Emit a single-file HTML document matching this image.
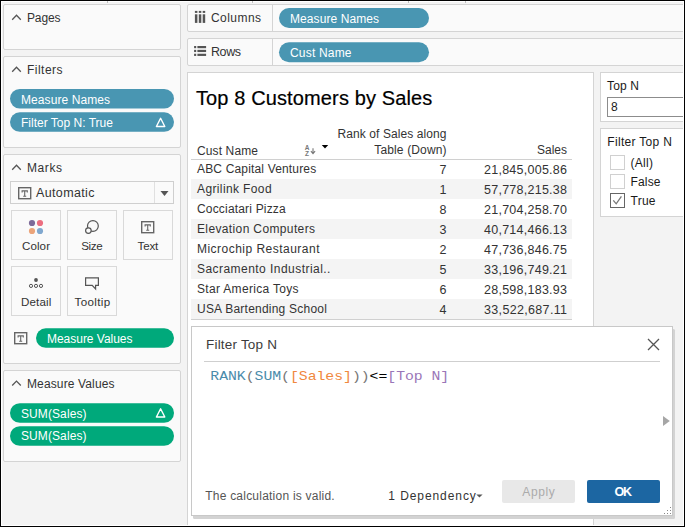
<!DOCTYPE html>
<html><head><meta charset="utf-8"><title>Tableau Filter Top N</title>
<style>html,body{margin:0;padding:0;background:#f2f2f2;overflow:hidden}svg{display:block}text{white-space:pre}</style>
</head><body>
<svg width="685" height="527" viewBox="0 0 685 527" shape-rendering="auto">
<rect x="0" y="0" width="685" height="527" fill="#f3f3f3" rx="0" />
<rect x="3.5" y="4.5" width="177" height="45" fill="#fafafa" stroke="#d4d4d4" rx="1.5" />
<polyline points="12.2,19.700000000000003 16.5,15.3 20.8,19.700000000000003" fill="none" stroke="#555" stroke-width="1.3"/>
<text x="27" y="21.6" font-family="Liberation Sans" font-size="12" fill="#333333" font-weight="normal" text-anchor="start" textLength="33.5" lengthAdjust="spacing" >Pages</text>
<rect x="3.5" y="56.5" width="177" height="91" fill="#fafafa" stroke="#d4d4d4" rx="1.5" />
<polyline points="12.2,71.70000000000002 16.5,67.30000000000001 20.8,71.70000000000002" fill="none" stroke="#555" stroke-width="1.3"/>
<text x="27" y="73.9" font-family="Liberation Sans" font-size="12" fill="#333333" font-weight="normal" text-anchor="start" textLength="35.5" lengthAdjust="spacing" >Filters</text>
<rect x="10" y="89" width="164" height="19.5" rx="9.75" fill="#4996b2"/>
<text x="21" y="103.8" font-family="Liberation Sans" font-size="12" fill="#fff" font-weight="normal" text-anchor="start" textLength="89" lengthAdjust="spacing" >Measure Names</text>
<rect x="10" y="112.3" width="164" height="19.500000000000014" rx="9.750000000000007" fill="#4996b2"/>
<text x="21" y="126.8" font-family="Liberation Sans" font-size="12" fill="#fff" font-weight="normal" text-anchor="start" textLength="92" lengthAdjust="spacing" >Filter Top N: True</text>
<polygon points="160.6,118.3 164.79999999999998,126.5 156.4,126.5" fill="none" stroke="#fff" stroke-width="1.4" stroke-linejoin="round"/>
<rect x="3.5" y="154.5" width="177" height="209" fill="#fafafa" stroke="#d4d4d4" rx="1.5" />
<polyline points="12.2,169.70000000000002 16.5,165.3 20.8,169.70000000000002" fill="none" stroke="#555" stroke-width="1.3"/>
<text x="27" y="172" font-family="Liberation Sans" font-size="12" fill="#333333" font-weight="normal" text-anchor="start" textLength="35" lengthAdjust="spacing" >Marks</text>
<rect x="10.5" y="181.5" width="163" height="22" fill="#fafafa" stroke="#cfcfcf" rx="0" />
<rect x="154" y="182" width="1" height="21" fill="#e0e0e0"/>
<polygon points="160.5,191 168.5,191 164.5,196" fill="#555"/>
<rect x="18.7" y="187.7" width="12" height="11" fill="none" stroke="#666" stroke-width="1.4"/>
<path d="M22.099999999999998,192.5 V190.9 H27.3 V192.5 M24.7,190.9 V196.3 M23.2,196.3 H26.2" fill="none" stroke="#666" stroke-width="1.1"/>
<text x="36" y="196.8" font-family="Liberation Sans" font-size="12.5" fill="#333333" font-weight="normal" text-anchor="start" textLength="58.5" lengthAdjust="spacing" >Automatic</text>
<rect x="11.5" y="210.5" width="49" height="49" fill="#fafafa" stroke="#d9d9d9" rx="0" />
<text x="22" y="249.8" font-family="Liberation Sans" font-size="11.6" fill="#333333" font-weight="normal" text-anchor="start" textLength="28" lengthAdjust="spacing" >Color</text>
<rect x="67.5" y="210.5" width="49" height="49" fill="#fafafa" stroke="#d9d9d9" rx="0" />
<text x="81.2" y="249.8" font-family="Liberation Sans" font-size="11.6" fill="#333333" font-weight="normal" text-anchor="start" textLength="21.5" lengthAdjust="spacing" >Size</text>
<rect x="123.5" y="210.5" width="49" height="49" fill="#fafafa" stroke="#d9d9d9" rx="0" />
<text x="137.5" y="249.8" font-family="Liberation Sans" font-size="11.6" fill="#333333" font-weight="normal" text-anchor="start" textLength="20.8" lengthAdjust="spacing" >Text</text>
<rect x="11.5" y="266.5" width="49" height="49" fill="#fafafa" stroke="#d9d9d9" rx="0" />
<text x="21" y="305.8" font-family="Liberation Sans" font-size="11.6" fill="#333333" font-weight="normal" text-anchor="start" textLength="30.3" lengthAdjust="spacing" >Detail</text>
<rect x="67.5" y="266.5" width="49" height="49" fill="#fafafa" stroke="#d9d9d9" rx="0" />
<text x="74.5" y="305.8" font-family="Liberation Sans" font-size="11.6" fill="#333333" font-weight="normal" text-anchor="start" textLength="35.6" lengthAdjust="spacing" >Tooltip</text>
<circle cx="32" cy="223" r="3.1" fill="#7d6a99"/>
<circle cx="40" cy="223" r="3.1" fill="#ec6e80"/>
<circle cx="32" cy="231" r="3.1" fill="#eba47a"/>
<circle cx="40" cy="231" r="3.1" fill="#80a8cf"/>
<circle cx="92.9" cy="226" r="5.4" fill="none" stroke="#555" stroke-width="1.2"/>
<circle cx="88.4" cy="230.6" r="2.8" fill="#fafafa" stroke="#555" stroke-width="1.2"/>
<rect x="141.7" y="221.7" width="12" height="11" fill="none" stroke="#666" stroke-width="1.4"/>
<path d="M145.1,226.5 V224.9 H150.29999999999998 V226.5 M147.7,224.9 V230.3 M146.2,230.3 H149.2" fill="none" stroke="#666" stroke-width="1.1"/>
<circle cx="36" cy="280" r="1.9" fill="#555"/>
<circle cx="31" cy="285.9" r="1.6" fill="none" stroke="#555" stroke-width="1"/>
<circle cx="36" cy="285.9" r="1.6" fill="none" stroke="#555" stroke-width="1"/>
<circle cx="41" cy="285.9" r="1.6" fill="none" stroke="#555" stroke-width="1"/>
<path d="M85.6,277.8 H98.4 V285.3 H95.6 V289 L92.2,285.3 H85.6 Z" fill="none" stroke="#555" stroke-width="1.2" stroke-linejoin="miter"/>
<rect x="14.7" y="332.7" width="12" height="11" fill="none" stroke="#666" stroke-width="1.4"/>
<path d="M18.099999999999998,337.5 V335.9 H23.3 V337.5 M20.7,335.9 V341.29999999999995 M19.2,341.29999999999995 H22.2" fill="none" stroke="#666" stroke-width="1.1"/>
<rect x="36" y="328.3" width="138" height="19.5" rx="9.75" fill="#00a97b"/>
<text x="47" y="342.8" font-family="Liberation Sans" font-size="12" fill="#fff" font-weight="normal" text-anchor="start" textLength="85.5" lengthAdjust="spacing" >Measure Values</text>
<rect x="3.5" y="370.5" width="177" height="91" fill="#fafafa" stroke="#d4d4d4" rx="1.5" />
<polyline points="12.2,385.49999999999994 16.5,381.09999999999997 20.8,385.49999999999994" fill="none" stroke="#555" stroke-width="1.3"/>
<text x="27" y="387.8" font-family="Liberation Sans" font-size="12" fill="#333333" font-weight="normal" text-anchor="start" textLength="87.5" lengthAdjust="spacing" >Measure Values</text>
<rect x="10" y="403.2" width="164" height="19.600000000000023" rx="9.800000000000011" fill="#00a97b"/>
<text x="21" y="417.6" font-family="Liberation Sans" font-size="12" fill="#fff" font-weight="normal" text-anchor="start" textLength="65.5" lengthAdjust="spacing" >SUM(Sales)</text>
<polygon points="160.6,408.8 164.79999999999998,417 156.4,417" fill="none" stroke="#fff" stroke-width="1.4" stroke-linejoin="round"/>
<rect x="10" y="426.2" width="164" height="19.600000000000023" rx="9.800000000000011" fill="#00a97b"/>
<text x="21" y="440.3" font-family="Liberation Sans" font-size="12" fill="#fff" font-weight="normal" text-anchor="start" textLength="65.5" lengthAdjust="spacing" >SUM(Sales)</text>
<rect x="187.5" y="4.5" width="503" height="27" fill="#fafafa" stroke="#d4d4d4" rx="1.5" />
<rect x="272" y="5" width="1" height="26" fill="#d4d4d4"/>
<rect x="187.5" y="38.5" width="503" height="27" fill="#fafafa" stroke="#d4d4d4" rx="1.5" />
<rect x="272" y="39" width="1" height="26" fill="#d4d4d4"/>
<rect x="194.9" y="10.9" width="2.5" height="2" fill="#555"/>
<rect x="194.9" y="14.3" width="2.5" height="8.6" fill="#555"/>
<rect x="198.8" y="10.9" width="2.5" height="2" fill="#555"/>
<rect x="198.8" y="14.3" width="2.5" height="8.6" fill="#555"/>
<rect x="202.7" y="10.9" width="2.5" height="2" fill="#555"/>
<rect x="202.7" y="14.3" width="2.5" height="8.6" fill="#555"/>
<text x="211" y="22.1" font-family="Liberation Sans" font-size="12" fill="#333333" font-weight="normal" text-anchor="start" textLength="50" lengthAdjust="spacing" >Columns</text>
<rect x="194.1" y="46.0" width="2.1" height="2.2" fill="#555"/>
<rect x="197.4" y="46.0" width="8.7" height="2.2" fill="#555"/>
<rect x="194.1" y="49.85" width="2.1" height="2.2" fill="#555"/>
<rect x="197.4" y="49.85" width="8.7" height="2.2" fill="#555"/>
<rect x="194.1" y="53.75" width="2.1" height="2.2" fill="#555"/>
<rect x="197.4" y="53.75" width="8.7" height="2.2" fill="#555"/>
<text x="211" y="56.1" font-family="Liberation Sans" font-size="12.5" fill="#333333" font-weight="normal" text-anchor="start" textLength="30" lengthAdjust="spacing" >Rows</text>
<rect x="279" y="8" width="150" height="20" rx="10.0" fill="#4996b2"/>
<text x="290" y="23.0" font-family="Liberation Sans" font-size="12" fill="#fff" font-weight="normal" text-anchor="start" textLength="89" lengthAdjust="spacing" >Measure Names</text>
<rect x="279" y="42.2" width="150" height="20.0" rx="10.0" fill="#4996b2"/>
<text x="290" y="56.6" font-family="Liberation Sans" font-size="12" fill="#fff" font-weight="normal" text-anchor="start" textLength="61.5" lengthAdjust="spacing" >Cust Name</text>
<rect x="187.5" y="72.5" width="406" height="528" fill="#ffffff" stroke="#d4d4d4" rx="0" />
<text x="195.9" y="104.5" font-family="Liberation Sans" font-size="20" fill="#000" font-weight="normal" text-anchor="start" textLength="236.4" lengthAdjust="spacing" stroke="#000" stroke-width="0.2">Top 8 Customers by Sales</text>
<text x="197" y="154.6" font-family="Liberation Sans" font-size="12" fill="#333333" font-weight="normal" text-anchor="start" textLength="61" lengthAdjust="spacing" >Cust Name</text>
<text x="307" y="149.6" font-family="Liberation Sans" font-size="6.5" font-weight="bold" fill="#777" text-anchor="middle">A</text>
<text x="307" y="156.2" font-family="Liberation Sans" font-size="6.5" font-weight="bold" fill="#777" text-anchor="middle">Z</text>
<path d="M313,148.3 V153.2 M310.9,151.2 L313,153.6 L315.1,151.2" fill="none" stroke="#777" stroke-width="1.1"/>
<polygon points="321.8,145 328.2,145 325,148.6" fill="#000"/>
<text x="446.5" y="138" font-family="Liberation Sans" font-size="12" fill="#333333" font-weight="normal" text-anchor="end" textLength="109" lengthAdjust="spacing" >Rank of Sales along</text>
<text x="446.5" y="153.8" font-family="Liberation Sans" font-size="12" fill="#333333" font-weight="normal" text-anchor="end" textLength="72.2" lengthAdjust="spacing" >Table (Down)</text>
<text x="567" y="154.4" font-family="Liberation Sans" font-size="12" fill="#333333" font-weight="normal" text-anchor="end" textLength="30" lengthAdjust="spacing" >Sales</text>
<rect x="191" y="159" width="381" height="1" fill="#d0d0d0"/>
<text x="197" y="173" font-family="Liberation Sans" font-size="12" fill="#333333" font-weight="normal" text-anchor="start" textLength="119.2" lengthAdjust="spacing" >ABC Capital Ventures</text>
<text x="446.5" y="173.5" font-family="Liberation Sans" font-size="12.5" fill="#333333" font-weight="normal" text-anchor="end" >7</text>
<text x="567" y="173.6" font-family="Liberation Sans" font-size="12.5" fill="#333333" font-weight="normal" text-anchor="end" textLength="83" lengthAdjust="spacing" >21,845,005.86</text>
<rect x="191" y="179" width="381" height="20" fill="#f4f4f4" rx="0" />
<text x="197" y="193" font-family="Liberation Sans" font-size="12" fill="#333333" font-weight="normal" text-anchor="start" textLength="74.6" lengthAdjust="spacing" >Agrilink Food</text>
<text x="446.5" y="193.5" font-family="Liberation Sans" font-size="12.5" fill="#333333" font-weight="normal" text-anchor="end" >1</text>
<text x="567" y="193.6" font-family="Liberation Sans" font-size="12.5" fill="#333333" font-weight="normal" text-anchor="end" textLength="83" lengthAdjust="spacing" >57,778,215.38</text>
<text x="197" y="213" font-family="Liberation Sans" font-size="12" fill="#333333" font-weight="normal" text-anchor="start" textLength="88.7" lengthAdjust="spacing" >Cocciatari Pizza</text>
<text x="446.5" y="213.5" font-family="Liberation Sans" font-size="12.5" fill="#333333" font-weight="normal" text-anchor="end" >8</text>
<text x="567" y="213.6" font-family="Liberation Sans" font-size="12.5" fill="#333333" font-weight="normal" text-anchor="end" textLength="83" lengthAdjust="spacing" >21,704,258.70</text>
<rect x="191" y="219" width="381" height="20" fill="#f4f4f4" rx="0" />
<text x="197" y="233" font-family="Liberation Sans" font-size="12" fill="#333333" font-weight="normal" text-anchor="start" textLength="118" lengthAdjust="spacing" >Elevation Computers</text>
<text x="446.5" y="233.5" font-family="Liberation Sans" font-size="12.5" fill="#333333" font-weight="normal" text-anchor="end" >3</text>
<text x="567" y="233.6" font-family="Liberation Sans" font-size="12.5" fill="#333333" font-weight="normal" text-anchor="end" textLength="83" lengthAdjust="spacing" >40,714,466.13</text>
<text x="197" y="253" font-family="Liberation Sans" font-size="12" fill="#333333" font-weight="normal" text-anchor="start" textLength="122.5" lengthAdjust="spacing" >Microchip Restaurant</text>
<text x="446.5" y="253.5" font-family="Liberation Sans" font-size="12.5" fill="#333333" font-weight="normal" text-anchor="end" >2</text>
<text x="567" y="253.6" font-family="Liberation Sans" font-size="12.5" fill="#333333" font-weight="normal" text-anchor="end" textLength="83" lengthAdjust="spacing" >47,736,846.75</text>
<rect x="191" y="259" width="381" height="20" fill="#f4f4f4" rx="0" />
<text x="197" y="273" font-family="Liberation Sans" font-size="12" fill="#333333" font-weight="normal" text-anchor="start" textLength="133.4" lengthAdjust="spacing" >Sacramento Industrial..</text>
<text x="446.5" y="273.5" font-family="Liberation Sans" font-size="12.5" fill="#333333" font-weight="normal" text-anchor="end" >5</text>
<text x="567" y="273.6" font-family="Liberation Sans" font-size="12.5" fill="#333333" font-weight="normal" text-anchor="end" textLength="83" lengthAdjust="spacing" >33,196,749.21</text>
<text x="197" y="293" font-family="Liberation Sans" font-size="12" fill="#333333" font-weight="normal" text-anchor="start" textLength="101.5" lengthAdjust="spacing" >Star America Toys</text>
<text x="446.5" y="293.5" font-family="Liberation Sans" font-size="12.5" fill="#333333" font-weight="normal" text-anchor="end" >6</text>
<text x="567" y="293.6" font-family="Liberation Sans" font-size="12.5" fill="#333333" font-weight="normal" text-anchor="end" textLength="83" lengthAdjust="spacing" >28,598,183.93</text>
<rect x="191" y="299" width="381" height="20" fill="#f4f4f4" rx="0" />
<text x="197" y="313" font-family="Liberation Sans" font-size="12" fill="#333333" font-weight="normal" text-anchor="start" textLength="129.9" lengthAdjust="spacing" >USA Bartending School</text>
<text x="446.5" y="313.5" font-family="Liberation Sans" font-size="12.5" fill="#333333" font-weight="normal" text-anchor="end" >4</text>
<text x="567" y="313.6" font-family="Liberation Sans" font-size="12.5" fill="#333333" font-weight="normal" text-anchor="end" textLength="83" lengthAdjust="spacing" >33,522,687.11</text>
<rect x="191" y="319" width="381" height="1" fill="#d0d0d0"/>
<rect x="600.5" y="72.5" width="90" height="49" fill="#ffffff" stroke="#d4d4d4" rx="0" />
<text x="607" y="89.8" font-family="Liberation Sans" font-size="12" fill="#1a1a1a" font-weight="normal" text-anchor="start" textLength="32" lengthAdjust="spacing" >Top N</text>
<rect x="607.5" y="97.5" width="83" height="19" fill="#ffffff" stroke="#8c8c8c" rx="0" />
<text x="611" y="111" font-family="Liberation Sans" font-size="12" fill="#1a1a1a" font-weight="normal" text-anchor="start" >8</text>
<rect x="600.5" y="128.5" width="90" height="88" fill="#ffffff" stroke="#d4d4d4" rx="0" />
<text x="607.3" y="146" font-family="Liberation Sans" font-size="12" fill="#1a1a1a" font-weight="normal" text-anchor="start" textLength="64.5" lengthAdjust="spacing" >Filter Top N</text>
<rect x="610.5" y="155.5" width="14" height="14" fill="#fff" stroke="#d0d0d0" rx="0" />
<text x="630.5" y="167" font-family="Liberation Sans" font-size="12" fill="#1a1a1a" font-weight="normal" text-anchor="start" textLength="22.5" lengthAdjust="spacing" >(All)</text>
<rect x="610.5" y="174.5" width="14" height="14" fill="#fff" stroke="#d0d0d0" rx="0" />
<text x="630.5" y="185.8" font-family="Liberation Sans" font-size="12" fill="#1a1a1a" font-weight="normal" text-anchor="start" textLength="30" lengthAdjust="spacing" >False</text>
<rect x="610.5" y="193.5" width="14" height="14" fill="#fff" stroke="#666" rx="0" />
<polyline points="613.3,200.3 616.2,203.8 621.4,196.3" fill="none" stroke="#777" stroke-width="1.3"/>
<text x="630.5" y="204.5" font-family="Liberation Sans" font-size="12" fill="#1a1a1a" font-weight="normal" text-anchor="start" textLength="25" lengthAdjust="spacing" >True</text>
<rect x="193" y="329" width="482" height="190" rx="1.5" fill="#d3d3d3"/>
<rect x="191.5" y="326.5" width="481" height="189" fill="#ffffff" stroke="#c8c8c8" rx="0" />
<text x="206" y="349.2" font-family="Liberation Sans" font-size="13.5" fill="#3c3c3c" font-weight="normal" text-anchor="start" textLength="71" lengthAdjust="spacing" >Filter Top N</text>
<rect x="204" y="361" width="456" height="1" fill="#cfcfcf"/>
<path d="M648,339 L659,350 M659,339 L648,350" stroke="#555" stroke-width="1.3"/>
<g transform="translate(0,380.4) scale(1,0.81)">
<text x="210.3" y="0" font-family="Liberation Mono" font-size="14.8" fill="#4a8bab" font-weight="normal" text-anchor="start" textLength="35.4" lengthAdjust="spacing" >RANK</text>
<text x="245.7" y="0" font-family="Liberation Mono" font-size="14.8" fill="#777" font-weight="normal" text-anchor="start" textLength="8.85" lengthAdjust="spacing" >(</text>
<text x="254.55" y="0" font-family="Liberation Mono" font-size="14.8" fill="#4a8bab" font-weight="normal" text-anchor="start" textLength="26.55" lengthAdjust="spacing" >SUM</text>
<text x="281.1" y="0" font-family="Liberation Mono" font-size="14.8" fill="#777" font-weight="normal" text-anchor="start" textLength="8.85" lengthAdjust="spacing" >(</text>
<text x="289.95" y="0" font-family="Liberation Mono" font-size="14.8" fill="#f0883e" font-weight="normal" text-anchor="start" textLength="61.95" lengthAdjust="spacing" >[Sales]</text>
<text x="351.9" y="0" font-family="Liberation Mono" font-size="14.8" fill="#777" font-weight="normal" text-anchor="start" textLength="17.7" lengthAdjust="spacing" >))</text>
<text x="369.6" y="0" font-family="Liberation Mono" font-size="14.8" fill="#000" font-weight="normal" text-anchor="start" textLength="17.7" lengthAdjust="spacing" >&lt;=</text>
<text x="387.3" y="0" font-family="Liberation Mono" font-size="14.8" fill="#9a76b8" font-weight="normal" text-anchor="start" textLength="61.95" lengthAdjust="spacing" >[Top N]</text>
</g>
<polygon points="663,416 669.8,421 663,426" fill="#a6a6a6"/>
<text x="205.2" y="500.2" font-family="Liberation Sans" font-size="12" fill="#555" font-weight="normal" text-anchor="start" textLength="129.5" lengthAdjust="spacing" >The calculation is valid.</text>
<text x="388.3" y="499.7" font-family="Liberation Sans" font-size="12" fill="#333333" font-weight="normal" text-anchor="start" textLength="87.5" lengthAdjust="spacing" >1 Dependency</text>
<polygon points="476.3,494.6 482.6,494.6 479.45,497.6" fill="#555"/>
<rect x="502" y="480" width="73" height="23" rx="2" fill="#e8e8e8"/>
<text x="522.3" y="496.2" font-family="Liberation Sans" font-size="12" fill="#ababab" font-weight="normal" text-anchor="start" textLength="32.5" lengthAdjust="spacing" >Apply</text>
<rect x="587" y="480" width="73" height="23" rx="2" fill="#1c66a2"/>
<text x="614.5" y="495.6" font-family="Liberation Sans" font-size="12.5" fill="#fff" font-weight="bold" text-anchor="start" textLength="17.5" lengthAdjust="spacing" >OK</text>
<rect x="670" y="507" width="1" height="1" fill="#888"/>
<rect x="667" y="510" width="1" height="1" fill="#888"/>
<rect x="670" y="510" width="1" height="1" fill="#888"/>
<rect x="664" y="513" width="1" height="1" fill="#888"/>
<rect x="667" y="513" width="1" height="1" fill="#888"/>
<rect x="670" y="513" width="1" height="1" fill="#888"/>
<rect x="1" y="1" width="683" height="1" fill="#ffffff"/>
<rect x="1" y="1" width="1" height="525" fill="#ffffff"/>
<rect x="683" y="1" width="1" height="525" fill="#ffffff"/>
<rect x="1" y="525" width="683" height="1" fill="#ffffff"/>
<rect x="0" y="0" width="685" height="1" fill="#000"/>
<rect x="0" y="526" width="685" height="1" fill="#000"/>
<rect x="0" y="0" width="1" height="527" fill="#000"/>
<rect x="684" y="0" width="1" height="527" fill="#000"/>
<rect x="107" y="1" width="1" height="2" fill="#c0c0c0"/>
<rect x="252" y="1" width="1" height="2" fill="#c0c0c0"/>
<rect x="408" y="1" width="1" height="2" fill="#c0c0c0"/>
<rect x="465" y="1" width="1" height="2" fill="#c0c0c0"/>
</svg>
</body></html>
